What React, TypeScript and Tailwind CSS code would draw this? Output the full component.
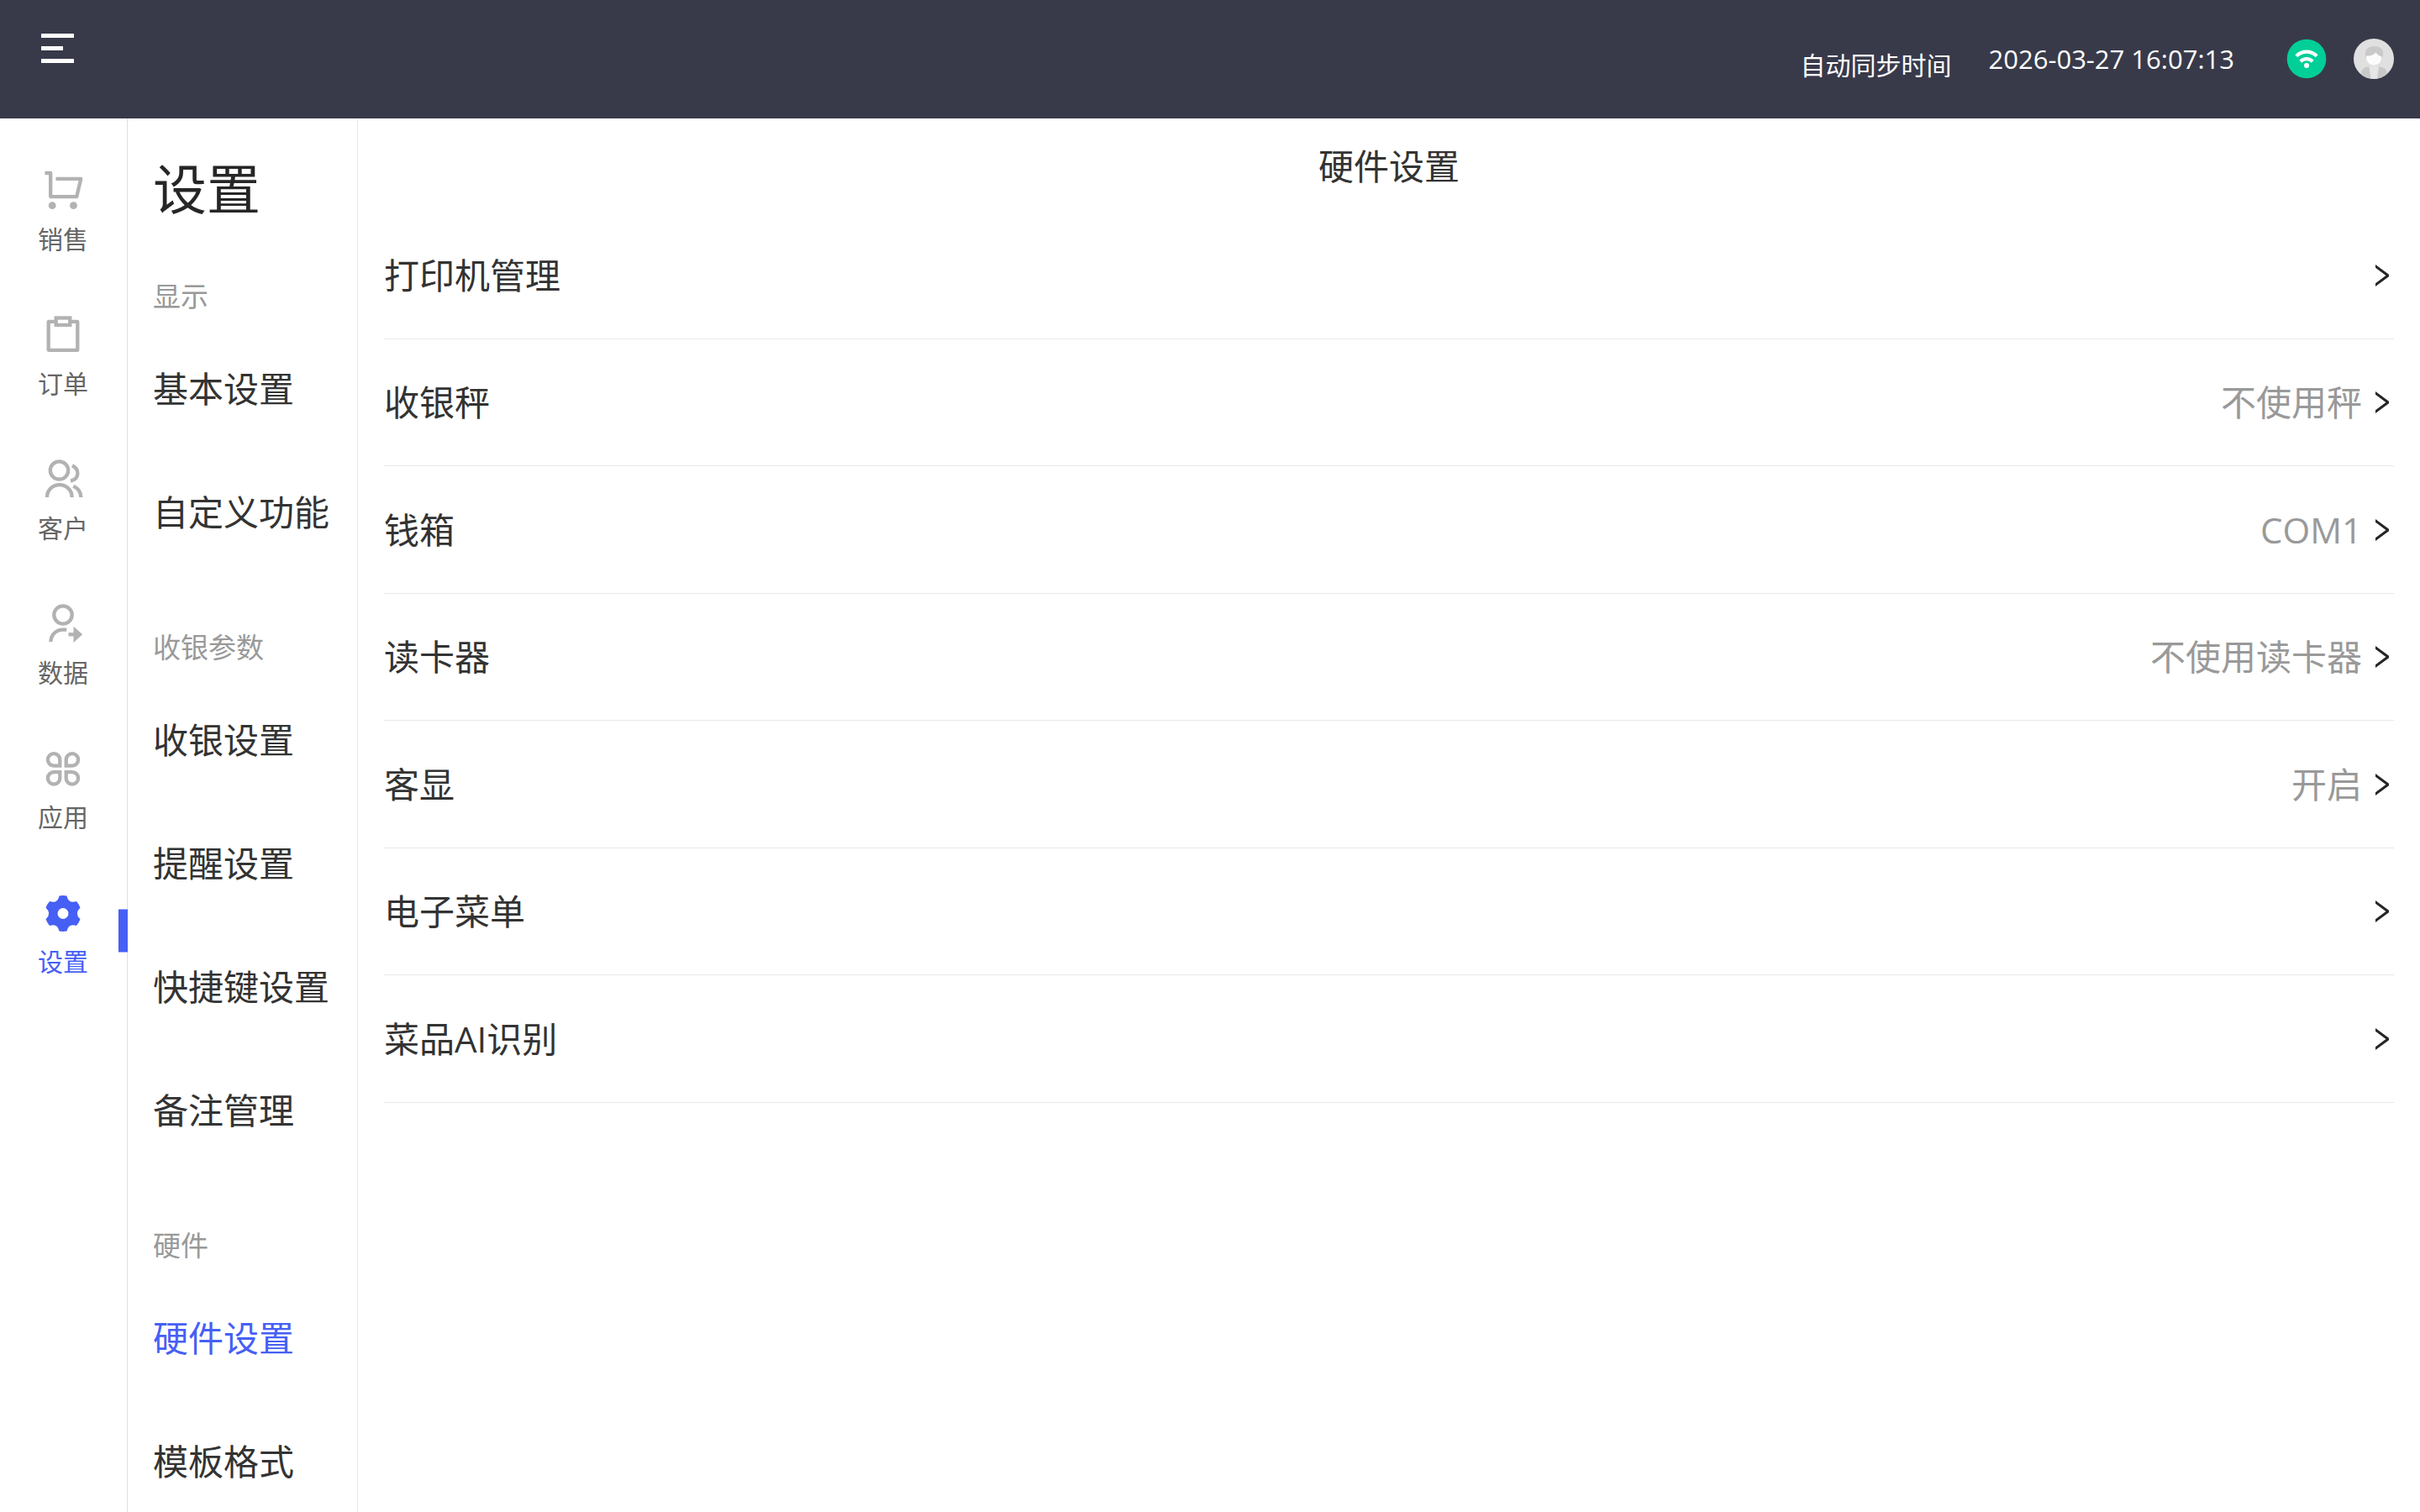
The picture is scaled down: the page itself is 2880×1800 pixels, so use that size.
import { useState } from "react";
import type { ReactNode } from "react";
import clsx from "clsx";

type RailItem = { label: string; icon: ReactNode };
type Group = { title: string; items: string[] };
type Row = { label: string; value?: string };

const RAIL: RailItem[] = [
  { label: "销售", icon: <CartIcon /> },
  { label: "订单", icon: <ClipboardIcon /> },
  { label: "客户", icon: <CustomersIcon /> },
  { label: "数据", icon: <UserArrowIcon /> },
  { label: "应用", icon: <AppsIcon /> },
  { label: "设置", icon: <GearIcon /> },
];

const GROUPS: Group[] = [
  { title: "显示", items: ["基本设置", "自定义功能"] },
  { title: "收银参数", items: ["收银设置", "提醒设置", "快捷键设置", "备注管理"] },
  { title: "硬件", items: ["硬件设置", "模板格式"] },
];

const ROWS: Row[] = [
  { label: "打印机管理" },
  { label: "收银秤", value: "不使用秤" },
  { label: "钱箱", value: "COM1" },
  { label: "读卡器", value: "不使用读卡器" },
  { label: "客显", value: "开启" },
  { label: "电子菜单" },
  { label: "菜品AI识别" },
];

export default function App() {
  const [section, setSection] = useState("设置");
  const [page, setPage] = useState("硬件设置");

  return (
    <div className="flex h-screen flex-col overflow-hidden bg-white font-['Open_Sans','Noto_Sans_CJK_SC',sans-serif] text-[#333]">
      <TopBar />
      <div className="flex min-h-0 flex-1">
        <nav className="w-[152px] shrink-0 border-r border-[#e0e0e0] pt-[21px]">
          {RAIL.map((item) => (
            <RailButton
              key={item.label}
              item={item}
              active={item.label === section}
              onClick={() => setSection(item.label)}
            />
          ))}
        </nav>

        <aside className="w-[274px] shrink-0 overflow-y-auto border-r border-[#e8e8e8] [scrollbar-width:none]">
          <h1 className="px-[30px] pt-[46px] pb-0.5 text-[64px] leading-[76px] text-[#262626]">
            设置
          </h1>
          {GROUPS.map((group) => (
            <section key={group.title}>
              <h2 className="px-[30px] pt-16 pb-3 text-[33px] leading-[48px] text-[#999]">
                {group.title}
              </h2>
              {group.items.map((name) => (
                <button
                  key={name}
                  type="button"
                  onClick={() => setPage(name)}
                  className={clsx(
                    "flex h-[147px] w-full items-center px-[30px] text-[42px] leading-[60px] whitespace-nowrap",
                    name === page && "text-[#465ff5]",
                  )}
                >
                  {name}
                </button>
              ))}
            </section>
          ))}
        </aside>

        <main className="min-w-0 flex-1 overflow-y-auto [scrollbar-width:none]">
          <h2 className="pt-[27px] pb-6 text-center text-[42px] leading-[60px]">{page}</h2>
          <ul className="mx-[31px]">
            {ROWS.map((row) => (
              <SettingRow key={row.label} row={row} />
            ))}
          </ul>
        </main>
      </div>
    </div>
  );
}

function TopBar() {
  return (
    <header className="flex h-[141px] shrink-0 items-center bg-[#383a4a] pr-[31px] pb-0.5 pl-[49px] text-white">
      <button type="button" aria-label="菜单" className="mt-10 self-start">
        <svg width="39" height="35" viewBox="0 0 39 35" fill="currentColor">
          <path d="M0 0H39V5H0zM0 15H26V20H0zM0 30H39V35H0z" />
        </svg>
      </button>
      <button type="button" className="mt-4 ml-auto text-[30px] leading-10">
        自动同步时间
      </button>
      <time className="ml-11 text-[31px] leading-10">2026-03-27 16:07:13</time>
      <svg className="ml-[62px]" width="48" height="48" viewBox="0 0 48 48" fill="none">
        <circle cx="24" cy="24" r="23.3" fill="#00cf97" />
        <g stroke="#fff" strokeWidth="4.2">
          <path d="M11.8 20.8A17 17 0 0 1 36.2 20.8" />
          <path d="M16.8 27.2A10.2 10.2 0 0 1 31.2 27.2" />
        </g>
        <circle cx="24" cy="32" r="3" fill="#fff" />
      </svg>
      <button type="button" aria-label="账户" className="ml-8">
        <svg width="48" height="48" viewBox="0 0 48 48">
          <circle cx="24" cy="24" r="24" fill="#e0e0e0" />
          <path
            d="M9 42.8C9 36.5 12 34 18 33.5H30.5C36.5 34 39.5 36.5 40 41.8A24 24 0 0 1 9 42.8z"
            fill="#c9c9c9"
          />
          <path d="M18.5 33H30L28 47.6A24 24 0 0 1 20.5 47.6z" fill="#e6e6e6" />
          <path d="M14 21C13 13 17 9 25 9C33 9 36 14 35 20L33 23H15z" fill="#c9c9c9" />
          <path
            d="M15 20.5C20 21 24 19.5 26.5 16.5C28 19 30 20.5 33 21C33.5 28 29.5 31.5 24 31.5C18.5 31.5 15 27.5 15 20.5z"
            fill="#fcfcfc"
          />
        </svg>
      </button>
    </header>
  );
}

function RailButton({
  item,
  active,
  onClick,
}: {
  item: RailItem;
  active: boolean;
  onClick: () => void;
}) {
  return (
    <button
      type="button"
      onClick={onClick}
      className={clsx(
        "relative flex h-[172px] w-full flex-col items-center gap-[15px] pt-10 pr-px",
        active ? "text-[#465ff5]" : "text-[#b2b2b2]",
      )}
    >
      {item.icon}
      <span className={clsx("text-[30px] leading-10", !active && "text-[#666]")}>{item.label}</span>
      {active && (
        <span className="absolute top-1/2 -right-px h-[51px] w-[11px] -translate-y-1/2 bg-[#465ff5]" />
      )}
    </button>
  );
}

function SettingRow({ row }: { row: Row }) {
  return (
    <li className="border-b border-[#e8e8e8] odd:h-[152px] even:h-[151px]">
      <button
        type="button"
        className="flex h-full w-full items-center justify-between pr-1.5 text-[42px] leading-[60px]"
      >
        <span>{row.label}</span>
        <span className="flex items-center gap-4 text-[#999]">
          {row.value}
          <svg width="16" height="26" viewBox="0 0 16 26" fill="#262626">
            <path d="M0 0L16 11.8V14.2L0 26V22.2L12.4 13L0 3.8z" />
          </svg>
        </span>
      </button>
    </li>
  );
}

function Icon({ children }: { children: ReactNode }) {
  return (
    <svg
      width="48"
      height="48"
      viewBox="0 0 48 48"
      fill="none"
      stroke="currentColor"
      strokeWidth="4.3"
      className="shrink-0"
    >
      {children}
    </svg>
  );
}

function CartIcon() {
  return (
    <Icon>
      <path d="M2.5 4H9.2V32.2H40.2L45.3 10.8H15.5" strokeLinejoin="round" />
      <g fill="currentColor" stroke="none">
        <circle cx="11.2" cy="42.7" r="4.4" />
        <circle cx="36.5" cy="42.7" r="4.4" />
      </g>
    </Icon>
  );
}

function ClipboardIcon() {
  return (
    <Icon>
      <rect x="6.7" y="8.8" width="34.6" height="34" rx="0.5" />
      <rect x="15.7" y="4.5" width="16.6" height="8.4" fill="#fff" />
    </Icon>
  );
}

function CustomersIcon() {
  return (
    <Icon>
      <circle cx="19.5" cy="14" r="10.7" />
      <path d="M5 46V45.5A14.8 14.3 0 0 1 34.6 45.5V46" />
      <path d="M35 8.3C43.8 12.5 43.8 24 33 26.6" />
      <path d="M36.3 32.6C42 35.5 45.4 40 45.4 46" />
    </Icon>
  );
}

function UserArrowIcon() {
  return (
    <Icon>
      <circle cx="24" cy="14" r="10.7" />
      <path d="M9.3 46C9.8 37 16.5 31.6 24 31.6H28.3" />
      <path d="M30.5 37.3H38" />
      <path d="M36.5 27.7L47.2 37.3L36.5 47z" fill="currentColor" stroke="none" />
    </Icon>
  );
}

function AppsIcon() {
  const petal = "M20.3 21.6H13A7.2 7.2 0 1 1 20.3 14.4z";
  return (
    <Icon>
      <path d={petal} />
      <path d={petal} transform="matrix(-1 0 0 1 48 0)" />
      <path d={petal} transform="matrix(1 0 0 -1 0 50.8)" />
      <path d={petal} transform="matrix(-1 0 0 -1 48 50.8)" />
    </Icon>
  );
}

function GearIcon() {
  // one tooth tip plus the hollow after it, repeated every 60 degrees
  const at = (deg: number, r: number) => {
    const a = (deg * Math.PI) / 180;
    return `${(24 + r * Math.sin(a)).toFixed(2)} ${(25.5 - r * Math.cos(a)).toFixed(2)}`;
  };
  const teeth = [0, 60, 120, 180, 240, 300].map(
    (deg) => `A21.5 21.5 0 0 1 ${at(deg + 12, 21.5)}Q${at(deg + 30, 13)} ${at(deg + 48, 21.5)}`,
  );
  return (
    <Icon>
      <path
        d={`M${at(-12, 21.5)}${teeth.join("")}zM17.5 25.5a6.5 6.5 0 1 0 13 0a6.5 6.5 0 1 0 -13 0z`}
        fill="currentColor"
        fillRule="evenodd"
        stroke="none"
      />
    </Icon>
  );
}
